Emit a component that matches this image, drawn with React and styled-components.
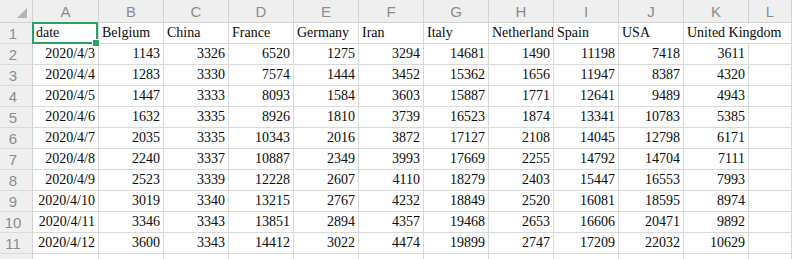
import React from "react";
import styled, { createGlobalStyle, css } from "styled-components";

const GlobalStyle = createGlobalStyle`
  html, body { margin: 0; padding: 0; background: #ffffff; overflow: hidden; }
  #root { width: 792px; height: 259px; overflow: hidden; }
`;

const COLS = ["A", "B", "C", "D", "E", "F", "G", "H", "I", "J", "K", "L"];

const HEADERS = [
  "date", "Belgium", "China", "France", "Germany", "Iran", "Italy",
  "Netherlands", "Spain", "USA", "United Kingdom",
];

const ROWS = [
  ["2020/4/3", 1143, 3326, 6520, 1275, 3294, 14681, 1490, 11198, 7418, 3611],
  ["2020/4/4", 1283, 3330, 7574, 1444, 3452, 15362, 1656, 11947, 8387, 4320],
  ["2020/4/5", 1447, 3333, 8093, 1584, 3603, 15887, 1771, 12641, 9489, 4943],
  ["2020/4/6", 1632, 3335, 8926, 1810, 3739, 16523, 1874, 13341, 10783, 5385],
  ["2020/4/7", 2035, 3335, 10343, 2016, 3872, 17127, 2108, 14045, 12798, 6171],
  ["2020/4/8", 2240, 3337, 10887, 2349, 3993, 17669, 2255, 14792, 14704, 7111],
  ["2020/4/9", 2523, 3339, 12228, 2607, 4110, 18279, 2403, 15447, 16553, 7993],
  ["2020/4/10", 3019, 3340, 13215, 2767, 4232, 18849, 2520, 16081, 18595, 8974],
  ["2020/4/11", 3346, 3343, 13851, 2894, 4357, 19468, 2653, 16606, 20471, 9892],
  ["2020/4/12", 3600, 3343, 14412, 3022, 4474, 19899, 2747, 17209, 22032, 10629],
];

const Sheet = styled.div`
  display: grid;
  grid-template-columns: 33px 66px repeat(10, 65px) 1fr;
  grid-template-rows: 23px repeat(12, 21px);
  width: 792px;
  background: #ffffff;
`;

const HeaderBase = styled.div`
  box-sizing: border-box;
  background: #efefef;
  color: #8c8c8c;
  font-family: "Liberation Sans", Arial, sans-serif;
  font-size: 15px;
  display: flex;
  align-items: center;
  justify-content: center;
  border-right: 1px solid #d2d2d2;
  border-bottom: 1px solid #d2d2d2;
`;

const Corner = styled(HeaderBase)`
  position: relative;
`;

const CornerMark = styled.svg`
  position: absolute;
  left: 16px;
  top: 7px;
`;

const ColHeader = styled(HeaderBase)`
  padding-top: 1px;
`;

const RowHeader = styled(HeaderBase)`
  padding-right: 6px;
  border-bottom-color: #dadada;
`;

const Cell = styled.div`
  box-sizing: border-box;
  position: relative;
  font-family: "Liberation Serif", "Times New Roman", serif;
  font-size: 14px;
  color: #0a0a0a;
  line-height: 20px;
  white-space: nowrap;
  overflow: hidden;
  border-right: 1px solid #dadada;
  border-bottom: 1px solid #dadada;
  padding: 0 3px;
  text-align: ${(p) => (p.$num ? "right" : "left")};
  ${(p) =>
    p.$spill &&
    css`
      overflow: visible;
      border-right-color: transparent;
      z-index: 1;
    `}
  ${(p) =>
    p.$selected &&
    css`
      overflow: visible;
      z-index: 2;
    `}
`;

const SelectionFrame = styled.div`
  position: absolute;
  left: -1px;
  top: -1px;
  right: 0;
  bottom: -1px;
  border: 2px solid #2f9f63;
  pointer-events: none;
`;

const FillHandle = styled.div`
  position: absolute;
  right: -3px;
  bottom: -4px;
  width: 6px;
  height: 6px;
  background: #2f9f63;
  box-shadow: 0 0 0 1px #ffffff;
`;

export default function App() {
  return (
    <>
      <GlobalStyle />
      <Sheet>
        <Corner>
          <CornerMark width="12" height="12" viewBox="0 0 12 12">
            <polygon points="11,1 11,11 1,11" fill="#b4b4b4" />
          </CornerMark>
        </Corner>
        {COLS.map((c) => (
          <ColHeader key={c}>{c}</ColHeader>
        ))}

        <RowHeader>1</RowHeader>
        {HEADERS.map((h, i) => (
          <Cell
            key={h}
            $selected={i === 0}
            $spill={i === HEADERS.length - 1}
          >
            {h}
            {i === 0 && (
              <SelectionFrame>
                <FillHandle />
              </SelectionFrame>
            )}
          </Cell>
        ))}
        <Cell />

        {ROWS.map((row, r) => (
          <React.Fragment key={r}>
            <RowHeader>{r + 2}</RowHeader>
            {row.map((v, i) => (
              <Cell key={i} $num>
                {v}
              </Cell>
            ))}
            <Cell />
          </React.Fragment>
        ))}

        <RowHeader />
        {COLS.map((c) => (
          <Cell key={c} />
        ))}
      </Sheet>
    </>
  );
}
